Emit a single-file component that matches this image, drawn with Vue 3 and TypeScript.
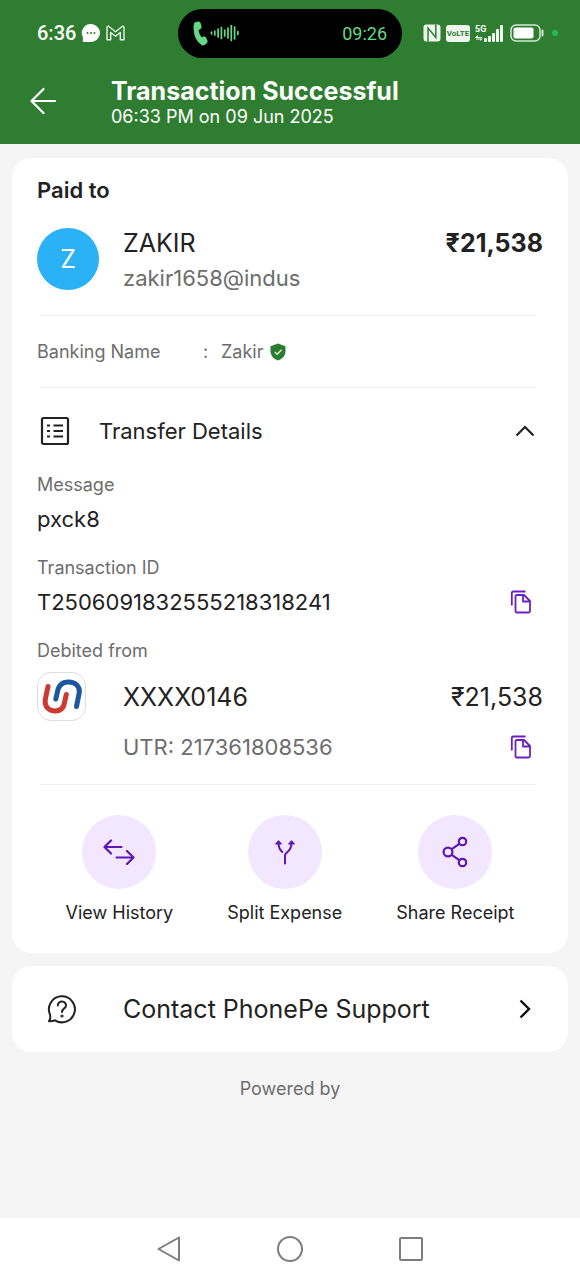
<script setup lang="ts">
import { ref } from 'vue'

const payee = { initial: 'Z', name: 'ZAKIR', vpa: 'zakir1658@indus', bankingName: 'Zakir' }
const amount = '₹21,538'
const transactionId = 'T2506091832555218318241'
const utr = '217361808536'

const expanded = ref(true)
const waveform = [3, 5, 9, 12, 7, 11, 16, 13, 4]
const signalBars = [4, 6, 9, 13, 17]

function copy(value: string): void {
  navigator.clipboard?.writeText(value)
}
</script>

<template>
  <div class="screen">
    <header class="top">
      <div class="status">
        <div class="status-left">
          <span class="clock">6:36</span>
          <svg class="chat" width="20" height="20" viewBox="0 0 20 20" aria-hidden="true">
            <path d="M10 1a9 9 0 1 1 0 18H1.800L2 14.500A9 9 0 0 1 10 1Z" fill="#fff" />
            <circle cx="6.500" cy="10" r="1" fill="#2f7d31" />
            <circle cx="10" cy="10" r="1" fill="#2f7d31" />
            <circle cx="13.500" cy="10" r="1" fill="#2f7d31" />
          </svg>
          <svg width="19" height="16" viewBox="0 0 19 16" fill="none" stroke="#eaf5ea" stroke-width="1.400" stroke-linejoin="round" aria-hidden="true">
            <path d="M1 14.800V2.500Q1 1 2.500 1.200L9.500 6.700L16.500 1.200Q18 1 18 2.500V14.800H14.300V7.500L9.500 11.300L4.700 7.500V14.800Z" />
          </svg>
        </div>
        <div class="island">
          <svg width="15" height="25" viewBox="0 0 15 25" fill="#63d985" aria-hidden="true">
            <path d="M2 1.200L5.500.5Q7 .4 7.600 2L8.500 5.500Q8.800 7 7.500 8L5.600 9.300Q6 13 8.500 16.300L10.800 15.600Q12.200 15.300 13 16.500L14.500 19.800Q15 21.200 13.800 22.300L11.600 24Q10.300 24.800 8.600 24Q.8 19 .6 7.500Q.3 2.200 2 1.200Z" />
          </svg>
          <svg class="wave" width="30" height="18" viewBox="0 0 30 18" stroke="#63d985" stroke-width="1.700" stroke-linecap="round" aria-hidden="true">
            <path v-for="(h, i) in waveform" :key="i" :d="`M${1.500 + i * 3.300} ${9 - h / 2 + 0.500}v${h - 1}`" />
          </svg>
          <span class="call-time">09:26</span>
        </div>
        <div class="status-right">
          <svg width="18" height="18" viewBox="0 0 18 18" aria-hidden="true">
            <rect x=".5" y=".5" width="17" height="17" rx="3" fill="#eef7ee" />
            <path d="M5 17.500V4L12.800 13.500V.5" fill="none" stroke="#2f7d31" stroke-width="1.500" />
          </svg>
          <span class="volte">VoLTE</span>
          <span class="signal">
            <span class="net">5G</span>
            <span class="bars" aria-hidden="true">
              <i v-for="(h, i) in signalBars" :key="i" :style="{ height: h + 'px' }"></i>
            </span>
            <svg class="updown" width="8" height="6" viewBox="0 0 8 6" fill="#eef7ee" aria-hidden="true">
              <path d="M0 2.500L3 0V2H7V3H0ZM8 3.500L5 6V4.500H1V3.500Z" />
            </svg>
          </span>
          <svg class="battery" width="34" height="18" viewBox="0 0 34 18" aria-hidden="true">
            <rect x="1" y="1" width="29" height="16" rx="5" fill="none" stroke="#d5ead5" stroke-width="1.500" />
            <rect x="3.500" y="3.500" width="20" height="11" rx="2" fill="#fff" />
            <path d="M32.500 6.500V11.500" stroke="#d5ead5" stroke-width="2" stroke-linecap="round" />
          </svg>
          <span class="dot"></span>
        </div>
      </div>
      <div class="title-bar">
        <button type="button" class="plain back" aria-label="Back">
          <svg width="26" height="28" viewBox="0 0 26 28" fill="none" stroke="#fff" stroke-width="2.200" stroke-linecap="round" stroke-linejoin="round">
            <path d="M13.500 2L1.500 14L13.500 26M1.500 14H25" />
          </svg>
        </button>
        <div>
          <h1>Transaction Successful</h1>
          <p class="when">06:33 PM on 09 Jun 2025</p>
        </div>
      </div>
    </header>

    <main>
      <section class="card">
        <h2>Paid to</h2>
        <div class="payee">
          <span class="avatar">{{ payee.initial }}</span>
          <div class="payee-text">
            <p class="large">{{ payee.name }}</p>
            <p class="vpa">{{ payee.vpa }}</p>
          </div>
          <strong class="paid">{{ amount }}</strong>
        </div>
        <hr />
        <dl class="banking">
          <dt>Banking Name</dt>
          <dd>
            <span class="colon">:</span>
            <span>{{ payee.bankingName }}</span>
            <svg width="16" height="18" viewBox="0 0 16 18" aria-hidden="true">
              <path d="M8 .5L15.500 3.200V8.500Q15.500 14.500 8 17.500Q.5 14.500 .5 8.500V3.200Z" fill="#2a7c2e" />
              <path d="M4.800 9L7.200 11.200L11.500 6.800" fill="none" stroke="#d9f0d9" stroke-width="1.500" />
            </svg>
          </dd>
        </dl>
        <hr />
        <button type="button" class="plain details-toggle" :aria-expanded="expanded" @click="expanded = !expanded">
          <svg width="30" height="30" viewBox="0 0 30 30" fill="none" stroke="#222" stroke-width="2.200" aria-hidden="true">
            <rect x="2" y="2" width="26" height="26" rx="1.500" />
            <path d="M7 9.500H10M7 15H10M7 20.500H10M13.500 9.500H23M13.500 15H23M13.500 20.500H23" stroke-width="2.200" />
          </svg>
          <span>Transfer Details</span>
          <svg class="chevron" :class="{ closed: !expanded }" width="20" height="12" viewBox="0 0 20 12" fill="none" stroke="#222" stroke-width="2.200" aria-hidden="true">
            <path d="M1.500 10.500L10 2L18.500 10.500" />
          </svg>
        </button>

        <div v-if="expanded">
          <p class="label">Message</p>
          <p class="value">pxck8</p>
          <p class="label next">Transaction ID</p>
          <div class="value split">
            <span>{{ transactionId }}</span>
            <button type="button" class="plain copy" aria-label="Copy transaction ID" @click="copy(transactionId)">
              <svg width="22" height="24" viewBox="0 0 22 24" fill="none" stroke="#6a20c0" stroke-width="1.800" stroke-linejoin="round">
                <path d="M1.800 15.500V3Q1.800 1.500 3.300 1.500H15.500" />
                <path d="M7 5H14L20 11V21Q20 22.500 18.500 22.500H7Q5.500 22.500 5.500 21V6.500Q5.500 5 7 5ZM13 5.300V11.500H19.800" />
              </svg>
            </button>
          </div>
          <p class="label next">Debited from</p>
          <div class="account">
            <span class="bank">
              <svg width="42" height="36" viewBox="0 0 42 36" fill="none" stroke-width="5" stroke-linecap="round" aria-hidden="true">
                <path d="M7 7.500L4.200 21C3.500 28 8 32 14 32C19.500 32 22.500 29 23.300 24.500L25.300 15.500" stroke="#cc3a32" />
                <path d="M14.800 20L17 10.500C18.500 5.500 22 3 27.500 3C34.500 3 39 7.500 38.300 13.500L35.500 27.500" stroke="#1c57a0" />
              </svg>
            </span>
            <span class="large">XXXX0146</span>
            <span class="large debit">{{ amount }}</span>
          </div>
          <div class="utr split">
            <span>UTR: {{ utr }}</span>
            <button type="button" class="plain copy" aria-label="Copy UTR" @click="copy(utr)">
              <svg width="22" height="24" viewBox="0 0 22 24" fill="none" stroke="#6a20c0" stroke-width="1.800" stroke-linejoin="round">
                <path d="M1.800 15.500V3Q1.800 1.500 3.300 1.500H15.500" />
                <path d="M7 5H14L20 11V21Q20 22.500 18.500 22.500H7Q5.500 22.500 5.500 21V6.500Q5.500 5 7 5ZM13 5.300V11.500H19.800" />
              </svg>
            </button>
          </div>
        </div>
        <hr />
        <div class="actions">
          <button type="button" class="plain action">
            <span class="disc">
              <svg width="32" height="26" viewBox="0 0 32 26" fill="none" stroke="#5f16b8" stroke-width="2.200" stroke-linecap="round" stroke-linejoin="round">
                <path d="M8 1.500L1.500 8L8 14.500M1.500 8H18.500M24 12L30.500 18.500L24 25M30.500 18.500H13.500" />
              </svg>
            </span>
            <span>View History</span>
          </button>
          <button type="button" class="plain action">
            <span class="disc">
              <svg width="22" height="26" viewBox="0 0 22 26" fill="none" stroke="#5f16b8" stroke-width="2" stroke-linecap="round" stroke-linejoin="round">
                <path d="M11 24.500V16.500C11 13 17.500 13 17.500 4M4.500 4C4.500 9 6 11 8.300 13" />
                <path d="M1.800 5L4.500 2L7.200 5ZM14.800 5L17.500 2L20.200 5Z" fill="#5f16b8" stroke-width="1.200" />
              </svg>
            </span>
            <span>Split Expense</span>
          </button>
          <button type="button" class="plain action">
            <span class="disc">
              <svg width="26" height="32" viewBox="0 0 26 32" fill="none" stroke="#5f16b8" stroke-width="2.200">
                <circle cx="6" cy="16" r="4.400" />
                <circle cx="20.500" cy="5.500" r="3.700" />
                <circle cx="20.500" cy="26.500" r="3.700" />
                <path d="M9.800 13.200L17.300 7.800M9.800 18.800L17.300 24.200" />
              </svg>
            </span>
            <span>Share Receipt</span>
          </button>
        </div>
      </section>

      <button type="button" class="plain support">
        <svg width="30" height="30" viewBox="0 0 30 30" fill="none" stroke="#222" stroke-width="2" stroke-linejoin="round" aria-hidden="true">
          <path d="M3 20.500A13 13 0 1 1 8 26.300Q5 27.500 2 27.200Q4 24.500 3 20.500Z" />
          <path d="M10.800 11.500C11 6 19.500 6.500 19 11.800C18.700 14.500 15 14.500 15 18" stroke-linecap="round" />
          <circle cx="15" cy="22" r=".6" />
        </svg>
        <span>Contact PhonePe Support</span>
        <svg class="go" width="12" height="20" viewBox="0 0 12 20" fill="none" stroke="#111" stroke-width="2.400" aria-hidden="true">
          <path d="M1.500 1.500L10 10L1.500 18.500" />
        </svg>
      </button>

      <p class="powered">Powered by</p>
    </main>

    <nav class="keys" aria-label="System navigation">
      <button type="button" class="plain" aria-label="Back">
        <svg width="26" height="28" viewBox="0 0 26 28" fill="none" stroke="#7d7d7d" stroke-width="2" stroke-linejoin="round">
          <path d="M23 2.500V25.500L2.500 14Z" />
        </svg>
      </button>
      <button type="button" class="plain" aria-label="Home">
        <svg width="26" height="28" viewBox="0 0 26 28" fill="none" stroke="#7d7d7d" stroke-width="2">
          <circle cx="13" cy="14" r="12" />
        </svg>
      </button>
      <button type="button" class="plain" aria-label="Recent apps">
        <svg width="26" height="28" viewBox="0 0 26 28" fill="none" stroke="#7d7d7d" stroke-width="2">
          <rect x="2" y="3" width="22" height="22" rx="1" />
        </svg>
      </button>
    </nav>
  </div>
</template>

<style>
body {
  margin: 0;
  background: #f5f5f5;
}
</style>

<style scoped>
.screen {
  display: flex;
  flex-direction: column;
  min-height: 100vh;
  font-family: Inter, "Noto Sans", sans-serif;
  color: #222;
  background: #f5f5f5;
}

h1,
h2,
p,
dl,
dd {
  margin: 0;
}

svg {
  display: block;
  flex: none;
}

.plain {
  padding: 0;
  border: 0;
  background: none;
  color: inherit;
  font: inherit;
  text-align: left;
  cursor: pointer;
}

.top {
  background: #2f7d31;
  color: #fff;
}

.status {
  display: grid;
  grid-template-columns: 1fr 224px 1fr;
  align-items: center;
  height: 66px;
  font-family: Roboto, sans-serif;
}

.status-left {
  display: flex;
  align-items: center;
  gap: 5px;
  padding-left: 37px;
}

.clock {
  font-size: 20px;
  font-weight: 500;
}

.island {
  display: flex;
  align-items: center;
  height: 49px;
  padding: 0 15px;
  border-radius: 25px;
  background: #000;
  color: #63d985;
}

.wave {
  margin-left: 2px;
}

.call-time {
  margin-left: auto;
  font-size: 18px;
}

.status-right {
  display: flex;
  align-items: center;
  gap: 5px;
  padding-left: 21px;
}

.volte {
  width: 24px;
  border-radius: 3px;
  background: #eef7ee;
  color: #2f7d31;
  font-size: 8px;
  font-weight: 700;
  line-height: 17px;
  text-align: center;
}

.signal {
  position: relative;
  display: flex;
  justify-content: flex-end;
  width: 28px;
  height: 18px;
}

.net {
  position: absolute;
  top: 0;
  left: 0;
  font-size: 9px;
  font-weight: 700;
  line-height: 10px;
}

.updown {
  position: absolute;
  bottom: 1px;
  left: 0;
}

.bars {
  display: flex;
  align-items: flex-end;
  gap: 1px;
}

.bars i {
  width: 3px;
  border-radius: 1px;
  background: #eef7ee;
}

.battery {
  margin-left: 2px;
}

.dot {
  width: 6px;
  height: 6px;
  margin-left: 3px;
  border-radius: 50%;
  background: #22bb55;
}

.title-bar {
  display: flex;
  align-items: flex-start;
  padding: 11px 30px 15px;
}

.back {
  width: 81px;
  padding-top: 10px;
}

h1 {
  font-size: 25px;
  font-weight: 700;
  line-height: 28px;
}

.when {
  font-size: 18px;
  line-height: 24px;
}

main {
  flex: 1;
  padding: 14px 12px 24px;
}

.card {
  padding: 18px 25px 28px;
  border-radius: 20px;
  background: #fff;
}

h2 {
  font-size: 22px;
  font-weight: 600;
  line-height: 28px;
}

.payee {
  display: flex;
  align-items: flex-start;
  margin: 24px 0 23px;
}

.avatar {
  width: 62px;
  margin-right: 24px;
  border-radius: 50%;
  background: #2bb2f6;
  color: #fff;
  font-size: 25px;
  line-height: 62px;
  text-align: center;
}

.large {
  font-size: 25px;
  line-height: 30px;
}

.vpa {
  margin-top: 6px;
  color: #6d6d6d;
  font-size: 22px;
  line-height: 28px;
}

.paid {
  margin-left: auto;
  font-size: 25px;
  font-weight: 700;
  line-height: 30px;
}

hr {
  height: 1px;
  margin: 0 7px 0 3px;
  border: 0;
  background: #ececec;
}

.banking {
  display: flex;
  align-items: center;
  height: 71px;
  color: #6d6d6d;
  font-size: 18px;
}

.banking dt {
  width: 166px;
}

.banking dd {
  display: flex;
  align-items: center;
}

.banking svg {
  margin-left: 7px;
}

.colon {
  width: 18px;
}

.details-toggle {
  display: flex;
  align-items: center;
  width: 100%;
  height: 86px;
  padding: 0 8px 0 3px;
  font-size: 22px;
}

.details-toggle span {
  margin-left: 29px;
}

.chevron {
  margin-left: auto;
}

.closed {
  transform: rotate(180deg);
}

.label {
  color: #6d6d6d;
  font-size: 18px;
  line-height: 22px;
}

.next {
  margin-top: 23px;
}

.value {
  margin-top: 8px;
  font-size: 22px;
  line-height: 30px;
}

.split {
  display: flex;
  align-items: center;
  justify-content: space-between;
}

.copy {
  margin-right: 11px;
}

.account {
  display: flex;
  align-items: center;
  margin-top: 10px;
}

.bank {
  display: flex;
  align-items: center;
  justify-content: center;
  box-sizing: border-box;
  width: 49px;
  height: 49px;
  margin-right: 37px;
  border: 1px solid #dcdce2;
  border-radius: 14px;
}

.debit {
  margin-left: auto;
}

.utr {
  margin: 12px 0 23px;
  padding-left: 86px;
  color: #6d6d6d;
  font-size: 22px;
  line-height: 28px;
}

.actions {
  display: flex;
  justify-content: center;
  gap: 54px;
  margin-top: 30px;
}

.action {
  display: flex;
  flex-direction: column;
  align-items: center;
  gap: 12px;
  font-size: 18px;
  line-height: 24px;
}

.disc {
  display: flex;
  align-items: center;
  justify-content: center;
  width: 74px;
  height: 74px;
  border-radius: 50%;
  background: #f2e7fe;
}

.support {
  display: flex;
  align-items: center;
  width: 100%;
  height: 86px;
  margin-top: 13px;
  padding: 0 37px 0 35px;
  border-radius: 20px;
  background: #fff;
  font-size: 25px;
}

.support span {
  margin-left: 46px;
}

.go {
  margin-left: auto;
}

.powered {
  margin-top: 25px;
  color: #6d6d6d;
  font-size: 18px;
  line-height: 24px;
  text-align: center;
}

.keys {
  display: flex;
  align-items: center;
  justify-content: center;
  gap: 95px;
  height: 62px;
  background: #fff;
}
</style>
